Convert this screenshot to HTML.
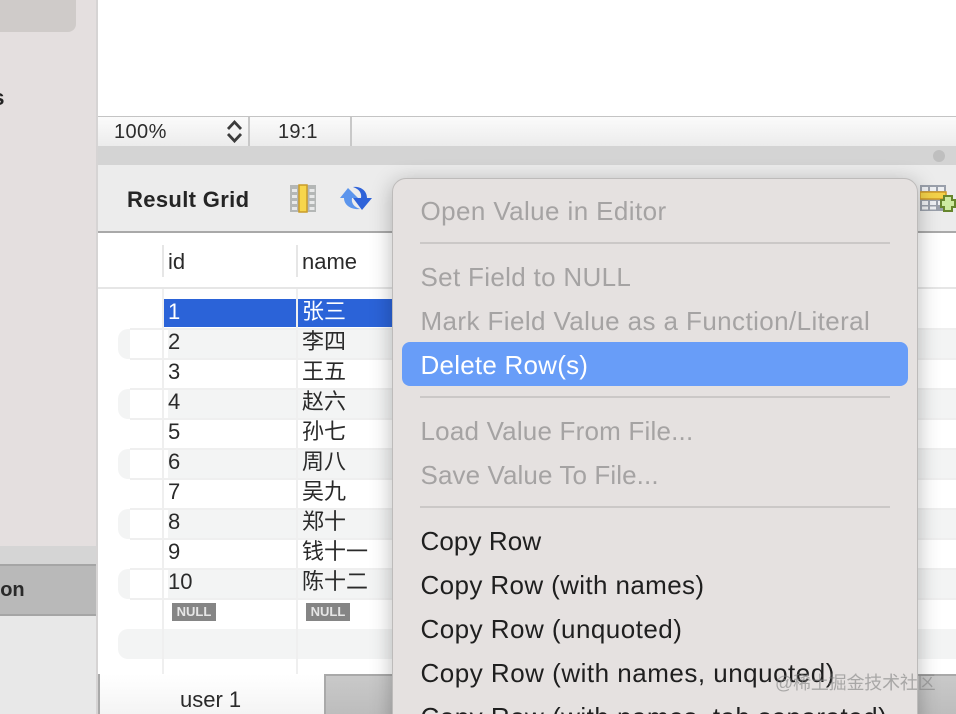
<!DOCTYPE html>
<html><head><meta charset="utf-8">
<style>
html,body{margin:0;padding:0;width:956px;height:714px;overflow:hidden;background:#fff}
body{position:relative;font-family:"Liberation Sans","Noto Sans CJK SC",sans-serif;color:#222}
.a{position:absolute}
.t{position:absolute;white-space:nowrap;line-height:30px;height:30px}
.c{font-size:22px;letter-spacing:0;color:#2a2a2a}
.m{position:absolute;left:420.500px;white-space:nowrap;font-size:26px;line-height:44px;height:44px;color:#1f1f1f}
.d{color:#a5a3a3}
.s{position:absolute;left:420px;width:470px;height:2px;background:#cbc8c7}
.n{position:absolute;width:44px;height:18px;background:#858585;color:#e6e6e6;font:bold 13px/18px "Liberation Sans",sans-serif;text-align:center}
.l{position:absolute;left:130px;width:826px;height:2px;background:#efefef}
.r{position:absolute;left:118px;width:838px;height:30px;background:#f3f4f4;border-radius:10px 0 0 10px}
.g{position:absolute;left:130px;width:38px;height:30px;background:#fff}
</style></head><body>
<!-- sidebar -->
<div class="a" style="left:0;top:0;width:96px;height:546px;background:#e4dfdf"></div>
<div class="a" style="left:0;top:-10px;width:76px;height:42px;background:#cfcbc9;border-radius:0 0 8px 0"></div>
<div class="t" style="left:-20px;top:83px;font-size:22px;font-weight:bold">ss</div>
<div class="a" style="left:0;top:546px;width:96px;height:18px;background:#d5d5d5"></div>
<div class="a" style="left:0;top:564px;width:96px;height:52px;box-sizing:border-box;background:#b9b9b9;border-top:2px solid #a5a5a5;border-bottom:2px solid #a5a5a5"></div>
<div class="t" style="left:-12px;top:575px;font-size:20px;font-weight:bold;color:#2a2a2a">tion</div>
<div class="a" style="left:0;top:616px;width:96px;height:98px;background:#e8e8e8"></div>
<div class="a" style="left:96px;top:0;width:2px;height:714px;background:#d6d4d4"></div>
<!-- status bar -->
<div class="a" style="left:98px;top:116px;width:858px;height:30px;box-sizing:border-box;border-top:1px solid #c4c4c4;background:linear-gradient(#fbfbfb,#ececec)"></div>
<div class="a" style="left:248px;top:117px;width:2px;height:29px;background:#c8c8c8"></div>
<div class="a" style="left:350px;top:117px;width:2px;height:29px;background:#c8c8c8"></div>
<div class="t" style="left:114px;top:117px;font-size:20px;color:#2c2c2c;letter-spacing:.4px">100%</div>
<div class="t" style="left:278px;top:117px;font-size:20px;color:#2c2c2c;letter-spacing:.2px">19:1</div>
<svg class="a" style="left:225px;top:119px" width="20" height="24" viewBox="0 0 20 24"><path d="M3 10L9.500 3L16 10M3 15L9.500 22L16 15" fill="none" stroke="#3c3c3c" stroke-width="2.800"/></svg>
<div class="a" style="left:98px;top:146px;width:858px;height:19px;background:#d4d4d4"></div>
<div class="a" style="left:933px;top:150px;width:12px;height:12px;border-radius:50%;background:#bfbfbf"></div>
<!-- toolbar -->
<div class="a" style="left:98px;top:165px;width:858px;height:66px;background:#ececec"></div>
<div class="a" style="left:98px;top:231px;width:858px;height:2px;background:#a9a9a9"></div>
<div class="t" style="left:127px;top:185px;font-size:22px;font-weight:bold;color:#252525;letter-spacing:.35px">Result Grid</div>
<svg class="a" style="left:290px;top:184px" width="27" height="29" viewBox="0 0 27 29">
<rect x="0" y="1" width="26" height="27" fill="#b4b7b6"/>
<rect x="9" y="1" width="8" height="27" fill="#f7d64c" stroke="#c99b2a" stroke-width="1.500"/>
<g fill="#e8e9e9"><rect x="2" y="5" width="5" height="3"/><rect x="2" y="11" width="5" height="3"/><rect x="2" y="17" width="5" height="3"/><rect x="2" y="23" width="5" height="3"/><rect x="19.500" y="5" width="5" height="3"/><rect x="19.500" y="11" width="5" height="3"/><rect x="19.500" y="17" width="5" height="3"/><rect x="19.500" y="23" width="5" height="3"/></g>
</svg>
<svg class="a" style="left:339px;top:184px" width="33" height="28" viewBox="0 0 33 28">
<path d="M9 4L1 14H5C5 21 12 26 21 25C15 23 12 19 13 14H19Z" fill="#5c95ec"/>
<path d="M23 26L33 14H28C28 7 22 2 14 3C20 5 23 9 22 14H14Z" fill="#2f63d9"/>
</svg>
<svg class="a" style="left:920px;top:185px" width="36" height="27" viewBox="0 0 36 27">
<rect x="0" y="0" width="26" height="26" fill="#9aa0ab"/>
<g fill="#eef0f3"><rect x="2" y="2" width="6" height="4"/><rect x="10" y="2" width="6" height="4"/><rect x="18" y="2" width="6" height="4"/><rect x="2" y="16" width="6" height="4"/><rect x="10" y="16" width="6" height="4"/><rect x="18" y="16" width="6" height="4"/><rect x="2" y="21.500" width="6" height="3"/><rect x="10" y="21.500" width="6" height="3"/></g>
<rect x="0" y="7" width="26" height="7" fill="#f3d24a" stroke="#d19a26" stroke-width="1.500"/>
<path d="M24 11h8v4h3v7h-3v4h-8v-4h-3v-7h3z" fill="#cdeaa0" stroke="#66862d" stroke-width="2"/>
</svg>
<!-- grid header -->
<div class="a" style="left:98px;top:287px;width:858px;height:2px;background:#e6e6e6"></div>
<div class="a" style="left:162px;top:245px;width:2px;height:32px;background:#e6e6e6"></div>
<div class="a" style="left:296px;top:245px;width:2px;height:32px;background:#e6e6e6"></div>
<div class="t c" style="left:168px;top:247px">id</div>
<div class="t c" style="left:302px;top:247px">name</div>
<!-- stripes -->
<div class="r" style="top:329px"></div>
<div class="r" style="top:389px"></div>
<div class="r" style="top:449px"></div>
<div class="r" style="top:509px"></div>
<div class="r" style="top:569px"></div>
<div class="r" style="top:629px"></div>
<!-- row gutter white -->
<div class="g" style="top:329px"></div>
<div class="g" style="top:389px"></div>
<div class="g" style="top:449px"></div>
<div class="g" style="top:509px"></div>
<div class="g" style="top:569px"></div>
<!-- row lines -->
<div class="l" style="top:328px"></div>
<div class="l" style="top:358px"></div>
<div class="l" style="top:388px"></div>
<div class="l" style="top:418px"></div>
<div class="l" style="top:448px"></div>
<div class="l" style="top:478px"></div>
<div class="l" style="top:508px"></div>
<div class="l" style="top:538px"></div>
<div class="l" style="top:568px"></div>
<div class="l" style="top:598px"></div>
<div class="a" style="left:162px;top:289px;width:2px;height:385px;background:#efefef"></div>
<div class="a" style="left:296px;top:289px;width:2px;height:385px;background:#efefef"></div>
<!-- selection -->
<div class="a" style="left:164px;top:299px;width:132px;height:28px;background:#2b63d8"></div>
<div class="a" style="left:298px;top:299px;width:100px;height:28px;background:#2b63d8"></div>
<!-- cells -->
<div class="t c" style="left:168px;top:297px;color:#fff">1</div><div class="t c" style="left:302px;top:297px;color:#fff">张三</div>
<div class="t c" style="left:168px;top:327px">2</div><div class="t c" style="left:302px;top:327px">李四</div>
<div class="t c" style="left:168px;top:357px">3</div><div class="t c" style="left:302px;top:357px">王五</div>
<div class="t c" style="left:168px;top:387px">4</div><div class="t c" style="left:302px;top:387px">赵六</div>
<div class="t c" style="left:168px;top:417px">5</div><div class="t c" style="left:302px;top:417px">孙七</div>
<div class="t c" style="left:168px;top:447px">6</div><div class="t c" style="left:302px;top:447px">周八</div>
<div class="t c" style="left:168px;top:477px">7</div><div class="t c" style="left:302px;top:477px">吴九</div>
<div class="t c" style="left:168px;top:507px">8</div><div class="t c" style="left:302px;top:507px">郑十</div>
<div class="t c" style="left:168px;top:537px">9</div><div class="t c" style="left:302px;top:537px">钱十一</div>
<div class="t c" style="left:168px;top:567px">10</div><div class="t c" style="left:302px;top:567px">陈十二</div>
<div class="n" style="left:172px;top:603px">NULL</div>
<div class="n" style="left:306px;top:603px">NULL</div>
<!-- tabs -->
<div class="a" style="left:98px;top:674px;width:858px;height:40px;background:linear-gradient(#c9c9c9,#bdbdbd);border-top:2px solid #a9a9a9;box-sizing:border-box"></div>
<div class="a" style="left:98px;top:674px;width:2px;height:40px;background:#a9a9a9"></div>
<div class="a" style="left:100px;top:674px;width:224px;height:40px;background:linear-gradient(#fff,#f4f4f4)"></div>
<div class="a" style="left:324px;top:674px;width:2px;height:40px;background:#a9a9a9"></div>
<div class="t c" style="left:180px;top:685px;color:#2a2a2a">user 1</div>
<!-- menu -->
<div class="a" style="left:392px;top:178px;width:526px;height:560px;box-sizing:border-box;background:#e5e1e0;border-radius:14px;border:1px solid #bdbbba;box-shadow:0 4px 22px rgba(0,0,0,.28)"></div>
<div class="a" style="left:402px;top:342px;width:506px;height:44px;background:#689df8;border-radius:8px"></div>
<div class="m d" style="top:189px;letter-spacing:.4px">Open Value in Editor</div>
<div class="s" style="top:242px"></div>
<div class="m d" style="top:255px;letter-spacing:.32px">Set Field to NULL</div>
<div class="m d" style="top:299px;letter-spacing:.4px">Mark Field Value as a Function/Literal</div>
<div class="m" style="top:343px;color:#fff;letter-spacing:.23px">Delete Row(s)</div>
<div class="s" style="top:396px"></div>
<div class="m d" style="top:409px;letter-spacing:.2px">Load Value From File...</div>
<div class="m d" style="top:453px;letter-spacing:.1px">Save Value To File...</div>
<div class="s" style="top:506px"></div>
<div class="m" style="top:519px;letter-spacing:.1px">Copy Row</div>
<div class="m" style="top:563px;letter-spacing:.38px">Copy Row (with names)</div>
<div class="m" style="top:607px;letter-spacing:.47px">Copy Row (unquoted)</div>
<div class="m" style="top:651px;letter-spacing:.5px">Copy Row (with names, unquoted)</div>
<div class="m" style="top:695px;letter-spacing:.48px">Copy Row (with names, tab separated)</div>
<!-- watermark -->
<div class="t" style="left:775px;top:668px;font-size:18px;color:rgba(130,130,130,.62);letter-spacing:-.2px">@稀土掘金技术社区</div>
</body></html>
